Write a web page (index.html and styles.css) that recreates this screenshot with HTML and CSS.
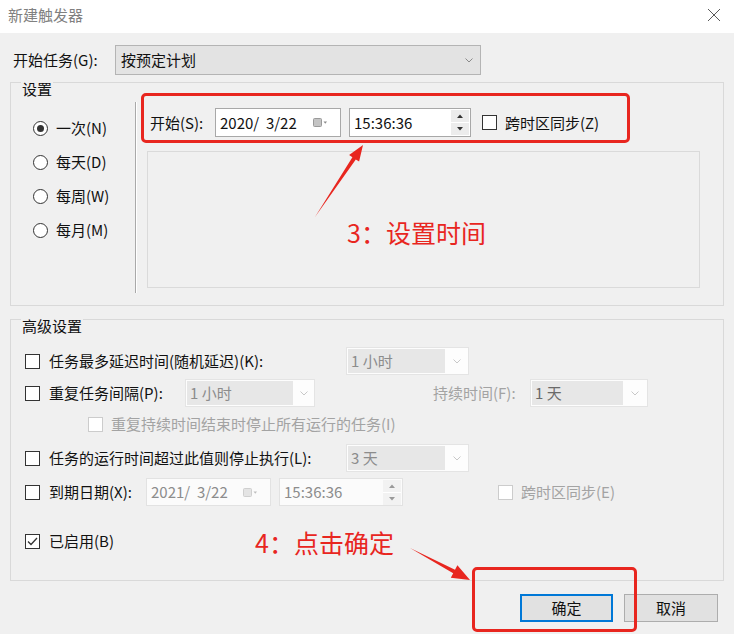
FILE: index.html
```html
<!DOCTYPE html>
<html lang="zh-CN">
<head>
<meta charset="utf-8">
<title>新建触发器</title>
<link rel="stylesheet" href="styles.css">
</head>
<body>
<div class="window">
  <div class="titlebar">
    <span class="title">新建触发器</span>
    <svg class="close" width="14" height="14" viewBox="0 0 14 14"><path d="M1 1L13 13M13 1L1 13" stroke="#5a5a5a" stroke-width="1" fill="none"/></svg>
  </div>
  <div class="main">
    <div class="task-row">
      <span class="task-label">开始任务(G):</span>
      <div class="combo-main">
        <span class="combo-text">按预定计划</span>
        <svg class="chev" width="8" height="5" viewBox="0 0 8 5"><path d="M0.5 0.5L4 4L7.5 0.5" stroke="#8a8a8a" fill="none"/></svg>
      </div>
    </div>

    <div class="group g1">
      <span class="group-title">设置</span>
      <div class="radio-col">
        <div class="radio-row"><span class="radio checked"></span><span class="radio-label">一次(N)</span></div>
        <div class="radio-row"><span class="radio"></span><span class="radio-label">每天(D)</span></div>
        <div class="radio-row"><span class="radio"></span><span class="radio-label">每周(W)</span></div>
        <div class="radio-row"><span class="radio"></span><span class="radio-label">每月(M)</span></div>
      </div>
      <div class="vsep"></div>
      <div class="schedule">
        <div class="start-row">
          <span class="start-label">开始(S):</span>
          <div class="field date">
            <span class="field-text">2020/  3/22</span>
            <svg class="cal" width="15" height="9" viewBox="0 0 15 9"><rect x="0.5" y="0.5" width="8" height="8" rx="1" fill="#c4c4c4" stroke="#9a9a9a"/><path d="M10.5 3.5L14 3.5L12.25 5.8Z" fill="#8a8a8a"/></svg>
          </div>
          <div class="field time">
            <span class="field-text">15:36:36</span>
            <div class="spin">
              <span class="spin-btn"><svg width="6" height="4" viewBox="0 0 6 4"><path d="M0 4L3 0.5L6 4Z" fill="#333"/></svg></span>
              <span class="spin-btn"><svg width="6" height="4" viewBox="0 0 6 4"><path d="M0 0L3 3.5L6 0Z" fill="#333"/></svg></span>
            </div>
          </div>
          <span class="check tz-check"></span>
          <span class="check-label">跨时区同步(Z)</span>
        </div>
        <div class="panel"></div>
      </div>
    </div>

    <div class="group g2">
      <span class="group-title">高级设置</span>
      <div class="adv-row r1">
        <span class="check"></span>
        <span class="adv-label w-long">任务最多延迟时间(随机延迟)(K):</span>
        <div class="dcombo c-delay"><span class="dval">1 小时</span><span class="dchev"><svg width="8" height="5" viewBox="0 0 8 5"><path d="M0.5 0.5L4 4L7.5 0.5" stroke="#c8c8c8" fill="none"/></svg></span></div>
      </div>
      <div class="adv-row r2">
        <span class="check"></span>
        <span class="adv-label w-repeat">重复任务间隔(P):</span>
        <div class="dcombo c-repeat"><span class="dval">1 小时</span><span class="dchev"><svg width="8" height="5" viewBox="0 0 8 5"><path d="M0.5 0.5L4 4L7.5 0.5" stroke="#c8c8c8" fill="none"/></svg></span></div>
        <span class="dis-label dur-label">持续时间(F):</span>
        <div class="dcombo c-dur"><span class="dval dark">1 天</span><span class="dchev"><svg width="8" height="5" viewBox="0 0 8 5"><path d="M0.5 0.5L4 4L7.5 0.5" stroke="#c8c8c8" fill="none"/></svg></span></div>
      </div>
      <div class="adv-row r3">
        <span class="check disabled indent"></span>
        <span class="dis-label">重复持续时间结束时停止所有运行的任务(I)</span>
      </div>
      <div class="adv-row r4">
        <span class="check"></span>
        <span class="adv-label w-long">任务的运行时间超过此值则停止执行(L):</span>
        <div class="dcombo c-delay"><span class="dval">3 天</span><span class="dchev"><svg width="8" height="5" viewBox="0 0 8 5"><path d="M0.5 0.5L4 4L7.5 0.5" stroke="#c8c8c8" fill="none"/></svg></span></div>
      </div>
      <div class="adv-row r5">
        <span class="check"></span>
        <span class="adv-label w-expire">到期日期(X):</span>
        <div class="field dfield ddate">
          <span class="field-text">2021/  3/22</span>
          <svg class="cal" width="15" height="9" viewBox="0 0 15 9"><rect x="0.5" y="0.5" width="8" height="8" rx="1" fill="#e4e4e4" stroke="#cfcfcf"/><path d="M10.5 3.5L14 3.5L12.25 5.8Z" fill="#bdbdbd"/></svg>
        </div>
        <div class="field dfield dtime">
          <span class="field-text">15:36:36</span>
          <div class="spin dspin">
            <span class="spin-btn"><svg width="6" height="4" viewBox="0 0 6 4"><path d="M0 4L3 0.5L6 4Z" fill="#9a9a9a"/></svg></span>
            <span class="spin-btn"><svg width="6" height="4" viewBox="0 0 6 4"><path d="M0 0L3 3.5L6 0Z" fill="#9a9a9a"/></svg></span>
          </div>
        </div>
        <span class="check disabled exp-check"></span>
        <span class="dis-label">跨时区同步(E)</span>
      </div>
      <div class="adv-row r6">
        <span class="check checked"><svg width="11" height="9" viewBox="0 0 11 9"><path d="M1 4.5L4 7.5L10 1" stroke="#333" stroke-width="1.3" fill="none"/></svg></span>
        <span class="adv-label">已启用(B)</span>
      </div>
    </div>

    <div class="buttons">
      <button class="btn primary">确定</button>
      <button class="btn">取消</button>
    </div>
  </div>

  <div class="mark mark-start"></div>
  <div class="mark mark-ok"></div>
  <div class="note note3">3：设置时间</div>
  <div class="note note4">4：点击确定</div>
  <svg class="arrows" width="734" height="634" viewBox="0 0 734 634">
    <polygon points="315,217 355.8,159.4 359.1,161.6 363,145 349.1,155 352.4,157.2" fill="#e8261f"/>
    <polygon points="410,548 453.2,573.3 450.8,577.7 470,580 457.4,565.3 455,569.7" fill="#e8261f"/>
  </svg>
</div>
</body>
</html>
```
FILE: styles.css
```css
* { box-sizing: border-box; }
html, body { margin: 0; padding: 0; }
body {
  font-family: "Noto Sans CJK SC", "Noto Sans", sans-serif;
  font-size: 15px;
  line-height: 20px;
  color: #111;
}
.window {
  position: relative;
  width: 734px;
  height: 634px;
  background: #f0f0f0;
  overflow: hidden;
}
.titlebar {
  height: 33px;
  background: #fff;
  display: flex;
  align-items: center;
  justify-content: space-between;
  padding: 0 13px 3px 8px;
}
.title { color: #808080; }
.close { display: block; }

.main { padding: 12px 10px 0 10px; }

.task-row { display: flex; align-items: center; height: 30px; }
.task-label { width: 105px; padding-left: 3px; }
.combo-main {
  width: 366px;
  height: 30px;
  background: #e3e3e3;
  border: 1px solid #b4b4b4;
  display: flex;
  align-items: center;
  justify-content: space-between;
  padding: 0 7px 0 5px;
}
.chev { display: block; }

.group {
  position: relative;
  border: 1px solid #d9d9d9;
}
.group-title {
  position: absolute;
  left: 10px;
  top: -3px;
  padding: 0 1px;
  background: #f0f0f0;
  line-height: 18px;
}
.g1 {
  margin-top: 7px;
  height: 224px;
  display: flex;
  align-items: flex-start;
}
.radio-col { width: 124px; padding: 28px 0 0 22px; }
.radio-row { height: 34px; display: flex; align-items: center; }
.radio {
  width: 15px;
  height: 15px;
  border-radius: 50%;
  border: 1px solid #333;
  background: #fff;
  display: flex;
  align-items: center;
  justify-content: center;
}
.radio.checked::after {
  content: "";
  width: 7px;
  height: 7px;
  border-radius: 50%;
  background: #333;
}
.radio-label { margin-left: 8px; }
.vsep {
  margin-top: 19px;
  width: 1px;
  height: 191px;
  background: #a9a9a9;
  box-shadow: 1px 0 0 #fff;
}
.schedule { padding: 25px 0 0 11px; }
.start-row { display: flex; align-items: center; height: 29px; }
.start-label { width: 68px; padding-left: 3px; }
.field {
  height: 29px;
  background: #fff;
  border: 1px solid #a8a8a8;
  display: flex;
  align-items: center;
  justify-content: space-between;
}
.field-text { white-space: pre; padding-left: 4px; }
.date { width: 126px; padding-right: 12px; }
.cal { display: block; }
.time { width: 122px; margin-left: 8px; padding-right: 1px; }
.spin { width: 18px; height: 25px; display: flex; flex-direction: column; }
.spin-btn {
  flex: 1;
  display: flex;
  align-items: center;
  justify-content: center;
  background: #ececec;
}
.spin-btn + .spin-btn { border-top: 1px solid #fff; }
.spin-btn svg { display: block; }
.check {
  width: 15px;
  height: 15px;
  border: 1px solid #333;
  background: #fff;
  flex: none;
  display: flex;
  align-items: center;
  justify-content: center;
}
.check.disabled { border-color: #cccccc; }
.tz-check { margin-left: 11px; }
.check-label { margin-left: 8px; }
.panel {
  margin-top: 14px;
  width: 553px;
  height: 137px;
  border: 1px solid #dadada;
}

.g2 {
  margin-top: 13px;
  height: 262px;
  padding: 26px 0 0 14px;
}
.adv-row { height: 30px; display: flex; align-items: center; }
.r2 { margin-top: 2px; }
.r3 { margin-top: 1px; }
.r4 { margin-top: 4px; }
.r5 { margin-top: 4px; }
.r6 { margin-top: 19px; }
.adv-label { padding-left: 9px; white-space: nowrap; }
.w-long { width: 306px; }
.w-repeat { width: 145px; }
.w-expire { width: 106px; }
.dis-label { color: #a3a3a3; margin-left: 8px; white-space: nowrap; }
.indent { margin-left: 63px; }
.dur-label { margin-left: 118px; width: 97px; }
.dcombo {
  height: 28px;
  display: flex;
  background: #fdfdfd;
  border: 1px solid #e4e4e4;
  padding: 1px 0 1px 1px;
}
.dval {
  flex: 1;
  background: #e7e7e7;
  color: #8c8c8c;
  padding-left: 3px;
  display: flex;
  align-items: center;
}
.dval.dark { color: #6a6a6a; }
.dchev { display: flex; align-items: center; justify-content: center; }
.dchev svg { display: block; }
.c-delay { width: 123px; }
.c-delay .dchev { width: 23px; }
.c-repeat { width: 130px; }
.c-repeat .dchev { width: 21px; }
.c-dur { width: 118px; }
.c-dur .dchev { width: 24px; }
.dfield { background: #fbfbfb; border-color: #e2e2e2; height: 28px; color: #8c8c8c; }
.ddate { width: 125px; padding-right: 12px; }
.dtime { width: 124px; margin-left: 8px; padding-right: 1px; }
.dspin .spin-btn { background: #f2f2f2; }
.exp-check { margin-left: 95px; }

.buttons {
  margin-top: 13px;
  display: flex;
  justify-content: flex-end;
  gap: 11px;
  padding-right: 6px;
}
.btn {
  font: inherit;
  color: #111;
  width: 94px;
  height: 28px;
  padding: 0;
  background: #e1e1e1;
  border: 1px solid #adadad;
}
.btn.primary { width: 93px; border: 2px solid #0078d7; }

.mark {
  position: absolute;
  border: 3px solid #e8261f;
  border-radius: 5px;
}
.mark-start { left: 141px; top: 93px; width: 489px; height: 50px; }
.mark-ok { left: 472px; top: 567px; width: 165px; height: 65px; }
.note {
  position: absolute;
  color: #e8261f;
  font-size: 25px;
  line-height: 30px;
  white-space: nowrap;
}
.note3 { left: 347px; top: 217px; }
.note4 { left: 255px; top: 527px; }
.arrows { position: absolute; left: 0; top: 0; pointer-events: none; }
```
